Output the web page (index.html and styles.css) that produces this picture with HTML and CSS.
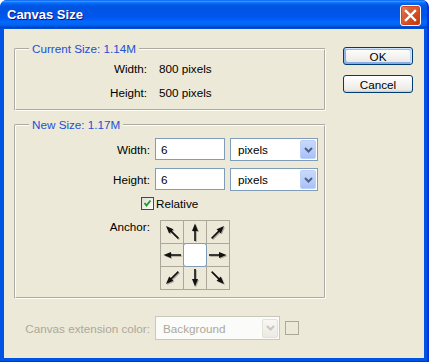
FILE: index.html
```html
<!doctype html>
<html lang="en">

<head>
    <meta charset="UTF-8">
    <title>Canvas Size</title>
    <link rel="stylesheet" href="styles.css">
</head>

<body>
    <svg class="defs" width="0" height="0">
        <defs>
            <symbol id="arrow" viewBox="0 0 22 22">
                <polygon points="11,2.5 14,10 8,10" />
                <rect x="10.2" y="9" width="1.6" height="11" />
            </symbol>
        </defs>
    </svg>

    <div class="window">
        <div class="titlebar">
            <span class="title">Canvas Size</span>
            <span class="close">
                <svg width="19" height="19" viewBox="0 0 19 19">
                    <path d="M5 5 L14 14 M14 5 L5 14" stroke="#fff" stroke-width="2.4" stroke-linecap="square" />
                </svg>
            </span>
        </div>

        <div class="frame">
            <div class="main">
                <div class="groups">
                    <fieldset class="group current">
                        <legend>Current Size: 1.14M</legend>
                        <div class="info-row"><span class="label">Width:</span><span class="value">800 pixels</span></div>
                        <div class="info-row"><span class="label">Height:</span><span class="value">500 pixels</span></div>
                    </fieldset>

                    <fieldset class="group new">
                        <legend>New Size: 1.17M</legend>
                        <div class="field-row">
                            <label class="label" for="w">Width:</label>
                            <input class="text" id="w" type="text" value="6">
                            <div class="select">
                                <span class="select-value">pixels</span>
                                <span class="drop"><svg width="9" height="6" viewBox="0 0 9 6"><path d="M1 1 L4.5 4.5 L8 1" fill="none" stroke="#4d6185" stroke-width="2" /></svg></span>
                            </div>
                        </div>
                        <div class="field-row">
                            <label class="label" for="h">Height:</label>
                            <input class="text" id="h" type="text" value="6">
                            <div class="select">
                                <span class="select-value">pixels</span>
                                <span class="drop"><svg width="9" height="6" viewBox="0 0 9 6"><path d="M1 1 L4.5 4.5 L8 1" fill="none" stroke="#4d6185" stroke-width="2" /></svg></span>
                            </div>
                        </div>
                        <div class="check-row">
                            <span class="checkbox">
                                <svg width="11" height="11" viewBox="0 0 11 11"><path d="M2.5 5 L4.5 7.5 L8.5 2.5" fill="none" stroke="#21a121" stroke-width="2" /></svg>
                            </span>
                            <span>Relative</span>
                        </div>
                        <div class="anchor-row">
                            <span class="label">Anchor:</span>
                            <div class="anchor">
                                <span class="cell"><svg viewBox="0 0 22 22"><use href="#arrow" transform="rotate(-45 11 11)" /></svg></span>
                                <span class="cell"><svg viewBox="0 0 22 22"><use href="#arrow" /></svg></span>
                                <span class="cell"><svg viewBox="0 0 22 22"><use href="#arrow" transform="rotate(45 11 11)" /></svg></span>
                                <span class="cell"><svg viewBox="0 0 22 22"><use href="#arrow" transform="rotate(-90 11 11)" /></svg></span>
                                <span class="cell center"></span>
                                <span class="cell"><svg viewBox="0 0 22 22"><use href="#arrow" transform="rotate(90 11 11)" /></svg></span>
                                <span class="cell"><svg viewBox="0 0 22 22"><use href="#arrow" transform="rotate(-135 11 11)" /></svg></span>
                                <span class="cell"><svg viewBox="0 0 22 22"><use href="#arrow" transform="rotate(180 11 11)" /></svg></span>
                                <span class="cell"><svg viewBox="0 0 22 22"><use href="#arrow" transform="rotate(135 11 11)" /></svg></span>
                            </div>
                        </div>
                    </fieldset>
                </div>

                <div class="buttons">
                    <button class="btn default">OK</button>
                    <button class="btn">Cancel</button>
                </div>
            </div>

            <div class="ext-row">
                <span class="label">Canvas extension color:</span>
                <div class="select disabled">
                    <span class="select-value">Background</span>
                    <span class="drop"><svg width="9" height="6" viewBox="0 0 9 6"><path d="M1 1 L4.5 4.5 L8 1" fill="none" stroke="#c9c7ba" stroke-width="2" /></svg></span>
                </div>
                <span class="swatch"></span>
            </div>
        </div>
    </div>
</body>

</html>
```

FILE: styles.css
```css
* {
    box-sizing: border-box;
    margin: 0;
    padding: 0;
}

html,
body {
    background: #fff;
}

body {
    font-family: "Liberation Sans", Arial, sans-serif;
    font-size: 11.7px;
    color: #000;
}

.defs {
    position: absolute;
    width: 0;
    height: 0;
}

/* window frame */

.window {
    width: 429px;
    height: 362px;
    display: flex;
    flex-direction: column;
    background: #0054e3;
    border-radius: 7px 7px 0 0;
    border-right: 2px solid #0831d9;
    border-bottom: 1px solid #0831d9;
    overflow: hidden;
}

.titlebar {
    height: 29px;
    flex: none;
    display: flex;
    align-items: center;
    justify-content: space-between;
    padding: 1px 6px 0 7px;
    background: linear-gradient(to bottom, #0058ee 0%, #3a93ff 4%, #288eff 6%, #127dff 8%, #036ffc 10%, #0262ee 14%, #0057e5 20%, #0054e3 24%, #0055eb 56%, #005bf5 66%, #026afe 76%, #0062ef 86%, #0052d6 92%, #0040ab 94%, #0054e3 100%);
}

.title {
    font-weight: bold;
    font-size: 13px;
    color: #fff;
    text-shadow: 1px 1px #0f1089;
    padding-bottom: 1px;
}

.close {
    width: 21px;
    height: 21px;
    display: flex;
    align-items: center;
    justify-content: center;
    border: 1px solid #fff;
    border-radius: 3px;
    background: radial-gradient(circle at 90% 90%, #c23a0c 0%, #d9552a 55%, #d8653e 70%, #ea8c6b 100%);
    box-shadow: inset 0 0 1px 1px #d4421a;
}

.frame {
    flex: 1;
    margin: 0 3px 3px 4px;
    background: #ece9d8;
    display: flex;
    flex-direction: column;
}

.main {
    display: flex;
}

/* group boxes */

.groups {
    width: 321px;
    padding: 13px 0 0 10px;
}

.group {
    width: 312px;
    border: 2px groove #fffef4;
    border-radius: 2px;
}

.group legend {
    margin-left: 13px;
    padding: 0 3px;
    line-height: 14px;
    color: #2150d6;
}

.current {
    padding: 1px 0 4px;
}

.new {
    margin-top: 7px;
    padding: 6px 0 7px;
}

.label {
    flex: none;
    text-align: right;
}

.info-row {
    display: flex;
    height: 24px;
    line-height: 24px;
}

.info-row .label {
    width: 131px;
}

.info-row .value {
    margin-left: 12px;
}

.field-row {
    display: flex;
    align-items: center;
    height: 23px;
    margin-bottom: 7px;
}

.field-row .label,
.anchor-row .label {
    width: 134px;
}

.text {
    width: 70px;
    height: 22px;
    margin-left: 5px;
    padding: 0 5px;
    border: 1px solid #7f9db9;
    font: inherit;
    color: #000;
    background: #fff;
    outline: none;
    align-self: flex-start;
}

.select {
    display: flex;
    align-items: center;
    justify-content: space-between;
    width: 88px;
    height: 23px;
    margin-left: 5px;
    padding: 1px;
    border: 1px solid #7f9db9;
    background: #fff;
}

.select-value {
    padding-left: 6px;
}

.drop {
    width: 16px;
    height: 19px;
    display: flex;
    align-items: center;
    justify-content: center;
    border: 1px solid #bcd0fa;
    border-radius: 2px;
    background: linear-gradient(to bottom, #c8d8fc, #b6ccfa 60%, #a8c0f6);
}

.check-row {
    display: flex;
    align-items: center;
    height: 13px;
    margin: -1px 0 0 125px;
}

.checkbox {
    width: 13px;
    height: 13px;
    margin-right: 2px;
    display: flex;
    align-items: center;
    justify-content: center;
    border: 1px solid #1c5180;
    background: linear-gradient(135deg, #dcdcd7, #fff);
}

.anchor-row {
    display: flex;
    margin-top: 10px;
}

.anchor-row .label {
    line-height: 13px;
}

.anchor {
    display: grid;
    grid-template-columns: repeat(3, 22px);
    grid-template-rows: repeat(3, 22px);
    gap: 1px;
    padding: 1px;
    margin-left: 10px;
    background: #aca899;
}

.cell {
    background: #ece9d8;
}

.cell svg {
    display: block;
    width: 22px;
    height: 22px;
    fill: #111;
    filter: drop-shadow(1px 1px 0 rgba(90, 88, 78, 0.45));
}

.cell.center {
    margin: -1px;
    background: #fff;
    border: 1px solid #7f9db9;
    border-radius: 3px;
}

/* buttons */

.buttons {
    display: flex;
    flex-direction: column;
    gap: 10px;
    margin: 18px 0 0 18px;
}

.btn {
    width: 70px;
    height: 18px;
    border: 1px solid #003c74;
    border-radius: 3px;
    font: inherit;
    color: #000;
    background: linear-gradient(to bottom, #fff, #ecebe6 86%, #d6d0c5);
    box-shadow: inset 0 -1px 1px #d6d0c5;
}

.btn.default {
    box-shadow: inset -1px 1px #cee7ff, inset 1px 2px #98b8ea, inset -2px 2px #bcd4f6, inset 1px -1px #89ade4, inset 2px -2px #89ade4;
}

/* bottom row */

.ext-row {
    display: flex;
    align-items: center;
    margin-top: 17px;
    color: #aca899;
}

.ext-row .label {
    width: 146px;
}

.ext-row .select {
    width: 125px;
    height: 24px;
    border-color: #c9c7ba;
    background: #fbfbf9;
}

.select.disabled .drop {
    border-color: #e3e1d6;
    background: linear-gradient(to bottom, #f7f7f4, #eceae2);
}

.swatch {
    width: 14px;
    height: 14px;
    margin-left: 5px;
    border: 1px solid #aca899;
}
```
